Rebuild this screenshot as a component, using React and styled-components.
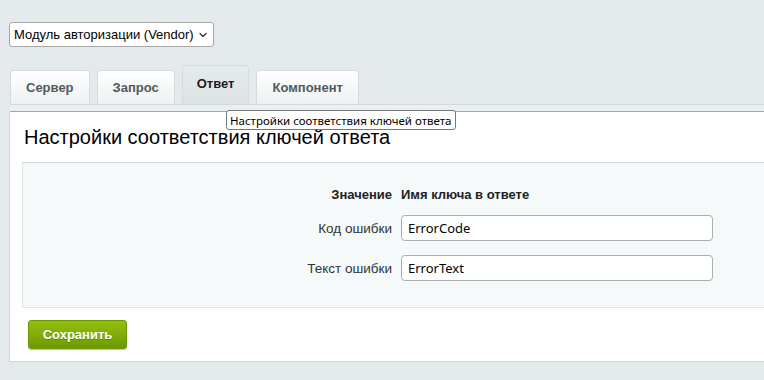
import styled, { createGlobalStyle } from "styled-components";
import { ChevronDown } from "lucide-react";

const TABS = ["Сервер", "Запрос", "Ответ", "Компонент"];
const ACTIVE = 2;

const ROWS = [
  { label: "Код ошибки", value: "ErrorCode" },
  { label: "Текст ошибки", value: "ErrorText" },
];

export default function App() {
  return (
    <Page>
      <GlobalStyle />
      <SelectBox>
        <Select defaultValue="vendor">
          <option value="vendor">Модуль авторизации (Vendor)</option>
        </Select>
        <ChevronDown size={12} strokeWidth={2.5} color="#333" />
      </SelectBox>

      <TabBar>
        {TABS.map((name, i) => (
          <Tab key={name} $active={i === ACTIVE}>
            {name}
          </Tab>
        ))}
      </TabBar>
      <TabStrip />

      <Panel>
        <Title>Настройки соответствия ключей ответа</Title>
        <FormBox>
          <HeadCell $right>Значение</HeadCell>
          <HeadCell>Имя ключа в ответе</HeadCell>
          {ROWS.map((row) => (
            <Row key={row.label}>
              <Label>{row.label}</Label>
              <Input defaultValue={row.value} />
            </Row>
          ))}
        </FormBox>
        <SaveButton>Сохранить</SaveButton>
      </Panel>

      <Tooltip>Настройки соответствия ключей ответа</Tooltip>
    </Page>
  );
}

const GlobalStyle = createGlobalStyle`
  html, body {
    margin: 0;
    overflow: hidden;
    background: #e4eaec;
  }
  body {
    font-family: "Liberation Sans", Arial, sans-serif;
    font-size: 13px;
    color: #000;
  }
`;

const Page = styled.div`
  position: relative;
  padding: 22px 0 0 9px;
  width: 800px;
  height: 380px;
  box-sizing: border-box;
`;

const SelectBox = styled.div`
  display: flex;
  align-items: center;
  justify-content: space-between;
  width: 205px;
  height: 25px;
  box-sizing: border-box;
  padding: 0 4px 0 4px;
  background: #fff;
  border: 1px solid #a7a7a7;
  border-radius: 3px;
`;

const Select = styled.select`
  appearance: none;
  border: 0;
  outline: 0;
  background: transparent;
  padding: 0;
  font-family: "Liberation Sans", Arial, sans-serif;
  font-size: 13px;
  color: #000;
`;

const TabBar = styled.div`
  display: flex;
  align-items: flex-end;
  gap: 7px;
  margin: 18px 0 0 1px;
  height: 39px;
`;

const Tab = styled.div`
  height: ${(p) => (p.$active ? 39 : 34)}px;
  box-sizing: border-box;
  padding: ${(p) => (p.$active ? "0 14px 4px" : "0 15px")};
  display: flex;
  align-items: center;
  font-weight: bold;
  font-size: 13px;
  color: ${(p) => (p.$active ? "#1c1c1c" : "#4f5a5e")};
  border: 1px solid #d6dcde;
  border-bottom: 0;
  border-radius: 4px 4px 0 0;
  background: ${(p) =>
    p.$active
      ? "linear-gradient(#e6ebed, #dde3e5)"
      : "linear-gradient(#ffffff, #eef1f2)"};
`;

const TabStrip = styled.div`
  margin-left: 1px;
  height: 6px;
  background: #e9eef0;
  border-top: 1px solid #d3d9db;
  border-bottom: 1px solid #9ea6a8;
`;

const Panel = styled.div`
  margin-left: 1px;
  background: #fff;
  padding: 14px 0 12px 12px;
  box-shadow: -1px 1px 1px rgba(0, 0, 0, 0.08);
`;

const Title = styled.h2`
  margin: 0 0 0 2px;
  font-weight: normal;
  font-size: 20px;
  line-height: 23px;
  color: #000;
`;

const FormBox = styled.div`
  margin-top: 13px;
  display: grid;
  grid-template-columns: 369px 1fr;
  column-gap: 9px;
  row-gap: 14px;
  padding: 24px 0 26px;
  background: #f5f9f9;
  border-top: 1px solid #d3d9da;
  border-left: 1px solid #e2e7e8;
  border-bottom: 1px solid #dfe5e6;
`;

const HeadCell = styled.div`
  font-weight: bold;
  font-size: 13px;
  color: #222;
  text-align: ${(p) => (p.$right ? "right" : "left")};
  line-height: 16px;
  margin-bottom: -2px;
`;

const Row = styled.div`
  display: contents;
`;

const Label = styled.div`
  align-self: center;
  text-align: right;
  color: #333;
  font-size: 13.5px;
`;

const Input = styled.input`
  width: 312px;
  height: 26px;
  box-sizing: border-box;
  padding: 0 6px;
  border: 1px solid #a9aeb0;
  border-radius: 4px;
  background: #fff;
  font-family: "Noto Sans", sans-serif;
  font-size: 13px;
  color: #000;
  outline: 0;
`;

const SaveButton = styled.button`
  display: block;
  margin: 12px 0 0 6px;
  width: 99px;
  height: 29px;
  border: 1px solid #6b9600;
  border-radius: 3px;
  background: linear-gradient(#94be0f, #6c9b00);
  box-shadow: 0 1px 1px rgba(0, 0, 0, 0.25);
  font-family: "Liberation Sans", Arial, sans-serif;
  font-weight: bold;
  font-size: 13px;
  color: #fff;
  text-shadow: 0 1px 0 rgba(0, 0, 0, 0.25);
  cursor: pointer;
`;

const Tooltip = styled.div`
  position: absolute;
  left: 226px;
  top: 110px;
  height: 20px;
  box-sizing: border-box;
  padding: 0 3px;
  display: flex;
  align-items: center;
  background: #fff;
  border: 1px solid #767676;
  border-radius: 3px;
  font-family: "Noto Sans", sans-serif;
  font-size: 11.5px;
  color: #000;
  white-space: nowrap;
`;
